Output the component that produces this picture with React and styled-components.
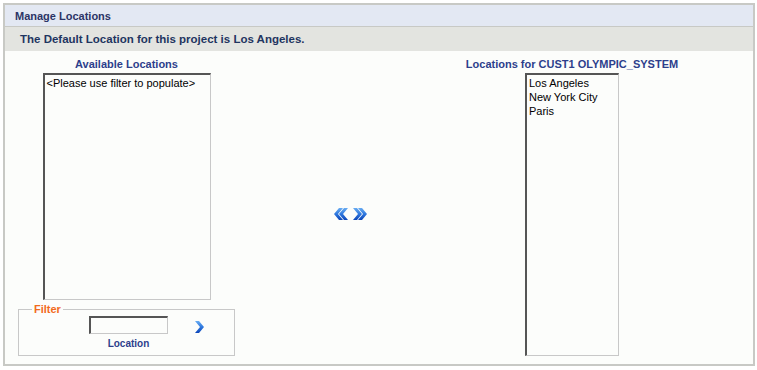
import React from "react";
import styled, { createGlobalStyle } from "styled-components";

const GlobalStyle = createGlobalStyle`
  body {
    margin: 0;
    background: #ffffff;
    font-family: "Liberation Sans", Arial, sans-serif;
  }
`;

const Page = styled.div`
  padding: 3px;
  width: 757px;
  height: 370px;
  box-sizing: border-box;
`;

const Panel = styled.div`
  width: 752px;
  height: 363px;
  box-sizing: border-box;
  border: 2px solid #c8c9c5;
  background: #fcfdfb;
  display: flex;
  flex-direction: column;
`;

const TitleBar = styled.div`
  height: 21px;
  background: #e3e8f3;
  border-bottom: 1px solid #c8c9c5;
  display: flex;
  align-items: center;
  padding-left: 10px;
  font-size: 11px;
  font-weight: bold;
  color: #2b3466;
`;

const InfoBar = styled.div`
  height: 24px;
  background: #e3e4e0;
  display: flex;
  align-items: center;
  padding-left: 15px;
  font-size: 11.5px;
  font-weight: bold;
  color: #1f3560;
`;

const Body = styled.div`
  flex: 1;
  display: grid;
  grid-template-columns: 217px 231px 212px;
  padding: 0 0 6px 13px;
`;

const Column = styled.div`
  display: flex;
  flex-direction: column;
  align-items: center;
`;

const Heading = styled.div`
  font-size: 11px;
  font-weight: bold;
  color: #2d3f8c;
  white-space: nowrap;
  margin-top: 6px;
  height: 16px;
  line-height: 14px;
`;

const ListBox = styled.div`
  width: ${(p) => p.$width}px;
  height: ${(p) => p.$height}px;
  box-sizing: border-box;
  border-top: 2px solid #555;
  border-left: 2px solid #555;
  border-right: 1px solid #c8c8c8;
  border-bottom: 1px solid #c8c8c8;
  background: #fcfdfb;
  padding: 1px 1px 1px 2px;
  font-size: 11px;
  line-height: 14px;
  color: #000;
`;

const Option = styled.div`
  white-space: nowrap;
`;

const Middle = styled.div`
  display: flex;
  align-items: center;
  justify-content: center;
  gap: 5px;
  padding-top: 18px;
`;

const Filter = styled.fieldset`
  margin: 3px 0 0 0;
  width: 217px;
  height: 53px;
  box-sizing: border-box;
  border: 1px solid #c8c8c8;
  padding: 0;
`;

const Legend = styled.legend`
  font-size: 11px;
  font-weight: bold;
  color: #f26b1d;
  padding: 0 2px;
  margin-left: 13px;
  line-height: 12px;
`;

const FilterRow = styled.div`
  display: flex;
  align-items: flex-start;
  padding-left: 70px;
  margin-top: 1px;
`;

const FilterField = styled.div`
  display: flex;
  flex-direction: column;
  align-items: center;
`;

const TextInput = styled.input`
  width: 79px;
  height: 18px;
  box-sizing: border-box;
  border-top: 2px solid #555;
  border-left: 2px solid #555;
  border-right: 1px solid #c8c8c8;
  border-bottom: 1px solid #c8c8c8;
  background: #fcfdfb;
  margin: 0;
  padding: 0 2px;
`;

const FieldLabel = styled.div`
  font-size: 10px;
  font-weight: bold;
  color: #2d3f8c;
  margin-top: 4px;
`;

const GoButton = styled.div`
  margin: 4px 0 0 27px;
  display: flex;
`;

const Chevron = ({ double, left, width = 14 }) => (
  <svg width={width} height="14" viewBox={`0 0 ${width} 14`}>
    <defs>
      <linearGradient id="cg" x1="0" y1="0" x2="0" y2="1">
        <stop offset="0" stopColor="#68acf2" />
        <stop offset="0.5" stopColor="#2f78de" />
        <stop offset="1" stopColor="#0c45b8" />
      </linearGradient>
    </defs>
    <g transform={left ? `translate(${width},0) scale(-1,1)` : undefined}>
      <path d="M0 1 L4 1 L9 7 L4 13 L0 13 L5 7 Z" fill="url(#cg)" />
      {double && (
        <path d="M5 1 L9 1 L14 7 L9 13 L5 13 L10 7 Z" fill="url(#cg)" />
      )}
    </g>
  </svg>
);

const App = () => {
  const assigned = ["Los Angeles", "New York City", "Paris"];
  return (
    <Page>
      <GlobalStyle />
      <Panel>
        <TitleBar>Manage Locations</TitleBar>
        <InfoBar>The Default Location for this project is Los Angeles.</InfoBar>
        <Body>
          <Column>
            <Heading>Available Locations</Heading>
            <ListBox $width={168} $height={227}>
              <Option>&lt;Please use filter to populate&gt;</Option>
            </ListBox>
            <Filter>
              <Legend>Filter</Legend>
              <FilterRow>
                <FilterField>
                  <TextInput type="text" />
                  <FieldLabel>Location</FieldLabel>
                </FilterField>
                <GoButton>
                  <Chevron width={9} />
                </GoButton>
              </FilterRow>
            </Filter>
          </Column>
          <Middle>
            <Chevron double left />
            <Chevron double />
          </Middle>
          <Column>
            <Heading>Locations for CUST1 OLYMPIC_SYSTEM</Heading>
            <ListBox $width={94} $height={283}>
              {assigned.map((loc) => (
                <Option key={loc}>{loc}</Option>
              ))}
            </ListBox>
          </Column>
        </Body>
      </Panel>
    </Page>
  );
};

export default App;
